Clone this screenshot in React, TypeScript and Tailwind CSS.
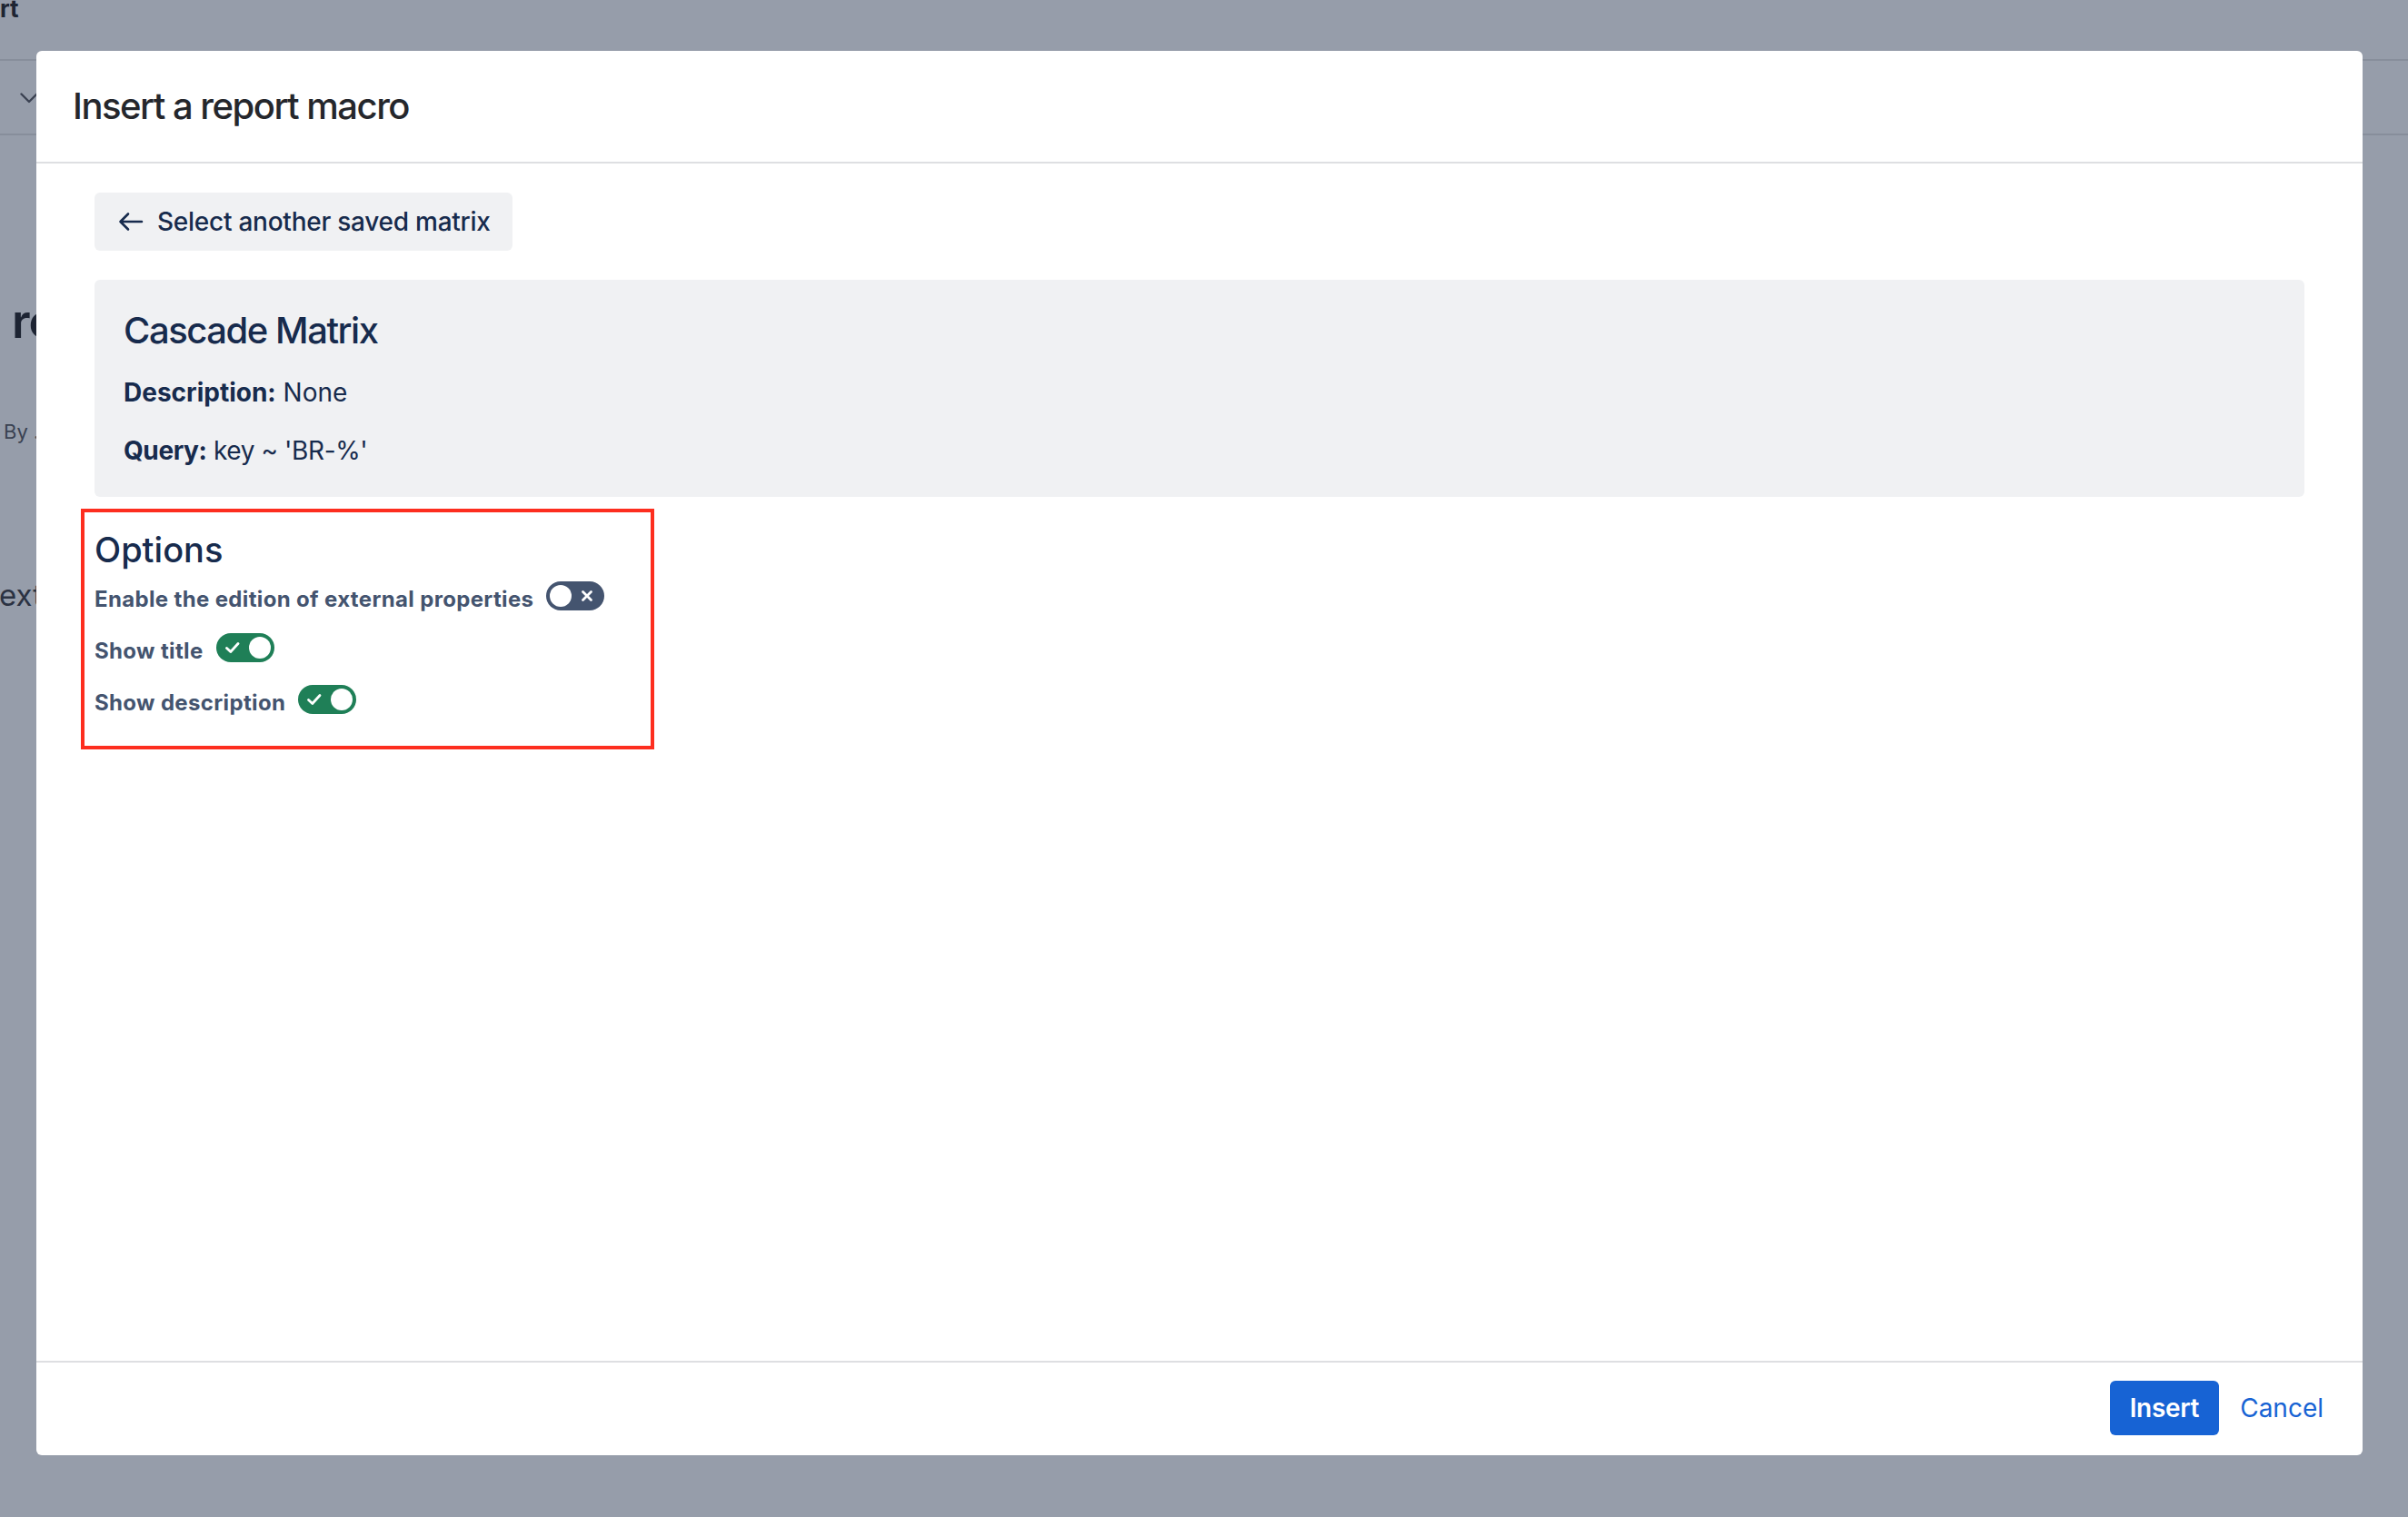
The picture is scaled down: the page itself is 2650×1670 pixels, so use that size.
import React from "react";

function Toggle({ on }: { on: boolean }) {
  return (
    <span
      className={`relative inline-block h-[32px] w-[64px] shrink-0 rounded-full ${
        on ? "bg-[#1f7f57]" : "bg-[#44546f]"
      }`}
    >
      {on ? (
        <>
          <svg className="absolute left-[9px] top-[8px]" width="18" height="16" viewBox="0 0 18 16">
            <path d="M2.5 8.5 L6.8 12.5 L15 3.5" fill="none" stroke="white" strokeWidth="2.8" strokeLinecap="round" strokeLinejoin="round" />
          </svg>
          <span className="absolute right-[4px] top-[4px] h-[24px] w-[24px] rounded-full bg-white" />
        </>
      ) : (
        <>
          <span className="absolute left-[4px] top-[4px] h-[24px] w-[24px] rounded-full bg-white" />
          <svg className="absolute left-[38px] top-[9px]" width="14" height="14" viewBox="0 0 14 14">
            <path d="M2.5 2.5 L11.5 11.5 M11.5 2.5 L2.5 11.5" fill="none" stroke="white" strokeWidth="2.8" strokeLinecap="round" />
          </svg>
        </>
      )}
    </span>
  );
}

function OptionRow({ label, on }: { label: string; on: boolean }) {
  return (
    <div className="flex items-center gap-[14px]">
      <span className="pt-2 text-[24px] font-bold leading-[24px] tracking-[0.35px] text-[#44546f]">{label}</span>
      <Toggle on={on} />
    </div>
  );
}

export default function App() {
  return (
    <div
      className="relative h-[1670px] w-[2650px] overflow-hidden bg-[#969daa]"
      style={{ fontFamily: "Inter, 'Noto Sans', sans-serif" }}
    >
      {/* background page under the blanket */}
      <div className="flex flex-col">
        <div className="h-[65px]">
          <div className="-mt-[3px] text-[26px] font-bold leading-none text-[#1e2533]">rt</div>
        </div>
        <div className="h-[2px] bg-[#878e9b]" />
        <div className="h-[80px] pl-[22px] pt-[35px]">
          <svg width="20" height="12" viewBox="0 0 20 12">
            <path d="M1.5 1.5 L10 10 L18.5 1.5" fill="none" stroke="#3b4252" strokeWidth="2.4" strokeLinecap="round" strokeLinejoin="round" />
          </svg>
        </div>
        <div className="h-[2px] bg-[#878e9b]" />
        <div className="mt-[179px] pl-[13px] text-[52px] font-semibold leading-none tracking-[-1px] text-[#1d2433]">re</div>
        <div className="mt-[84px] pl-[4px] text-[22px] leading-none text-[#3a4252]">By .</div>
        <div className="mt-[153px] -ml-[1px] text-[33px] leading-none text-[#2b3242]">ext</div>
      </div>

      {/* modal */}
      <div className="absolute left-[40px] top-[56px] flex h-[1546px] w-[2560px] flex-col rounded-[6px] bg-white">
        <div className="flex h-[122px] items-center px-[40px]">
          <h1 className="text-[40px] font-medium leading-[48px] tracking-[-1.5px] text-[#25272c]">Insert a report macro</h1>
        </div>
        <div className="h-[2px] bg-[#dedfe2]" />

        <div className="flex flex-1 flex-col items-start px-[64px] pt-[32px]">
          <button className="inline-flex h-[64px] items-center gap-[15px] rounded-[6px] bg-[#f0f1f3] pl-[26px] pr-[24px]">
            <svg width="28" height="22" viewBox="0 0 28 22">
              <path d="M26 11 H3 M11 2.5 L2.5 11 L11 19.5" fill="none" stroke="#172b4d" strokeWidth="2.6" strokeLinecap="round" strokeLinejoin="round" />
            </svg>
            <span className="text-[28px] font-medium leading-[32px] tracking-[-0.25px] text-[#172b4d]">Select another saved matrix</span>
          </button>

          <div className="mt-[32px] h-[239px] w-full rounded-[6px] bg-[#f0f1f3] pl-[32px] pt-[32px]">
            <h2 className="text-[40px] font-medium leading-[48px] tracking-[-1.45px] text-[#172b4d]">Cascade Matrix</h2>
            <p className="mt-[28px] text-[28px] leading-[32px] text-[#172b4d]">
              <span className="font-bold">Description:</span> None
            </p>
            <p className="mt-[32px] text-[28px] leading-[32px] tracking-[-0.4px] text-[#172b4d]">
              <span className="font-bold">Query:</span> key ~ 'BR-%'
            </p>
          </div>

          <div className="-ml-[15px] mt-[13px] h-[265px] w-[631px] border-4 border-[#fd2e1f] pl-[11px] pt-[17px]">
            <h3 className="text-[38px] font-medium leading-[48px] text-[#172b4d]">Options</h3>
            <div className="mt-[11px] flex flex-col gap-[25px]">
              <OptionRow label="Enable the edition of external properties" on={false} />
              <OptionRow label="Show title" on={true} />
              <OptionRow label="Show description" on={true} />
            </div>
          </div>
        </div>

        <div className="h-[2px] bg-[#dedfe2]" />
        <div className="flex items-center justify-end pb-[22px] pr-[20px] pt-[20px]">
          <button className="h-[60px] rounded-[6px] bg-[#1763d4] px-[22px] text-[28px] font-semibold tracking-[-0.3px] text-white">
            Insert
          </button>
          <button className="h-[60px] px-[23px] text-[28px] text-[#1763d4]">Cancel</button>
        </div>
      </div>
    </div>
  );
}
